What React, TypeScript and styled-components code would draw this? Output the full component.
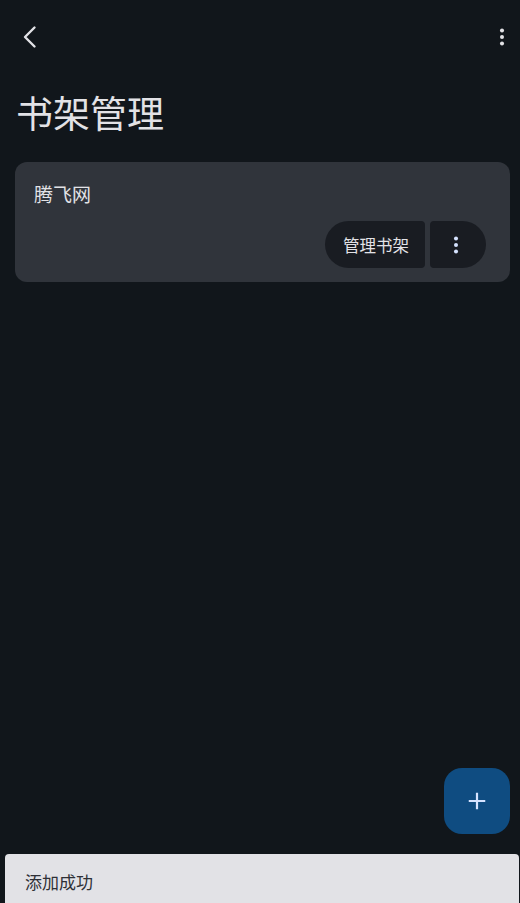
import React from "react";
import styled, { createGlobalStyle } from "styled-components";

const Global = createGlobalStyle`
  html, body { margin: 0; padding: 0; background: #11161b; }
  body { font-family: Roboto, "Noto Sans CJK SC", sans-serif; }
  #root { min-height: 903px; }
`;

const Page = styled.div`
  position: relative;
  width: 520px;
  height: 903px;
  background: #11161b;
  overflow: hidden;
  display: flex;
  flex-direction: column;
`;

const TopBar = styled.div`
  height: 74px;
  display: flex;
  align-items: center;
  justify-content: space-between;
  padding: 0 0 0 10px;
`;

const IconButton = styled.button`
  width: 40px;
  height: 40px;
  border: none;
  background: transparent;
  padding: 0;
  display: flex;
  align-items: center;
  justify-content: center;
  color: #e2e2e6;
`;

const MoreButton = styled(IconButton)`
  width: 36px;
`;

const Title = styled.h1`
  margin: 13px 0 0 16px;
  font-family: "Noto Sans CJK SC", sans-serif;
  font-weight: 400;
  font-size: 37px;
  line-height: 50px;
  color: #e2e2e6;
`;

const Card = styled.div`
  margin: 25px 10px 0 15px;
  height: 120px;
  box-sizing: border-box;
  background: #30343b;
  border-radius: 12px;
  padding: 18px 24px 14px 19px;
  display: flex;
  flex-direction: column;
  justify-content: space-between;
`;

const CardTitle = styled.div`
  font-family: "Noto Sans CJK SC", sans-serif;
  font-size: 19px;
  line-height: 28px;
  color: #e2e2e6;
`;

const Actions = styled.div`
  display: flex;
  justify-content: flex-end;
  gap: 5px;
`;

const SegButton = styled.button<{ $side: "left" | "right" }>`
  height: 47px;
  border: none;
  background: #191c22;
  color: #e2e2e6;
  font-family: "Noto Sans CJK SC", sans-serif;
  font-size: 16.5px;
  display: flex;
  align-items: center;
  justify-content: center;
  padding: 0;
  border-radius: ${(p) => (p.$side === "left" ? "24px 4px 4px 24px" : "4px 24px 24px 4px")};
  width: ${(p) => (p.$side === "left" ? "100px" : "56px")};
  padding-left: ${(p) => (p.$side === "left" ? "2px" : "0")};
  padding-right: ${(p) => (p.$side === "right" ? "4px" : "0")};
`;

const Fab = styled.button`
  position: absolute;
  left: 444px;
  top: 768px;
  width: 66px;
  height: 66px;
  border: none;
  border-radius: 18px;
  background: #0f4c81;
  display: flex;
  align-items: center;
  justify-content: center;
  padding: 0;
`;

const Snackbar = styled.div`
  position: absolute;
  left: 5px;
  right: 1px;
  top: 854px;
  height: 60px;
  background: #e2e2e6;
  border-radius: 4px;
  box-sizing: border-box;
  padding: 16px 0 0 20px;
  font-family: "Noto Sans CJK SC", sans-serif;
  font-size: 17px;
  line-height: 24px;
  color: #2e3036;
`;

const Dots = ({ color, size = 20 }: { color: string; size?: number }) => (
  <svg width={size} height={size} viewBox="0 0 24 24">
    <circle cx="12" cy="5" r="2.2" fill={color} />
    <circle cx="12" cy="12" r="2.2" fill={color} />
    <circle cx="12" cy="19" r="2.2" fill={color} />
  </svg>
);

export default function App() {
  return (
    <Page>
      <Global />
      <TopBar>
        <IconButton aria-label="back">
          <svg width="24" height="24" viewBox="0 0 24 24">
            <path d="M16.5 2.5 L7 12 L16.5 21.5" fill="none" stroke="#e2e2e6" strokeWidth="2.4" strokeLinecap="round" strokeLinejoin="round" />
          </svg>
        </IconButton>
        <MoreButton aria-label="more">
          <Dots color="#e2e2e6" size={22} />
        </MoreButton>
      </TopBar>
      <Title>书架管理</Title>
      <Card>
        <CardTitle>腾飞网</CardTitle>
        <Actions>
          <SegButton $side="left">管理书架</SegButton>
          <SegButton $side="right" aria-label="more">
            <Dots color="#d6e3ff" size={22} />
          </SegButton>
        </Actions>
      </Card>
      <Fab aria-label="add">
        <svg width="22" height="22" viewBox="0 0 24 24">
          <path d="M12 3 V21 M3 12 H21" stroke="#d6e3ff" strokeWidth="2.4" />
        </svg>
      </Fab>
      <Snackbar>添加成功</Snackbar>
    </Page>
  );
}
